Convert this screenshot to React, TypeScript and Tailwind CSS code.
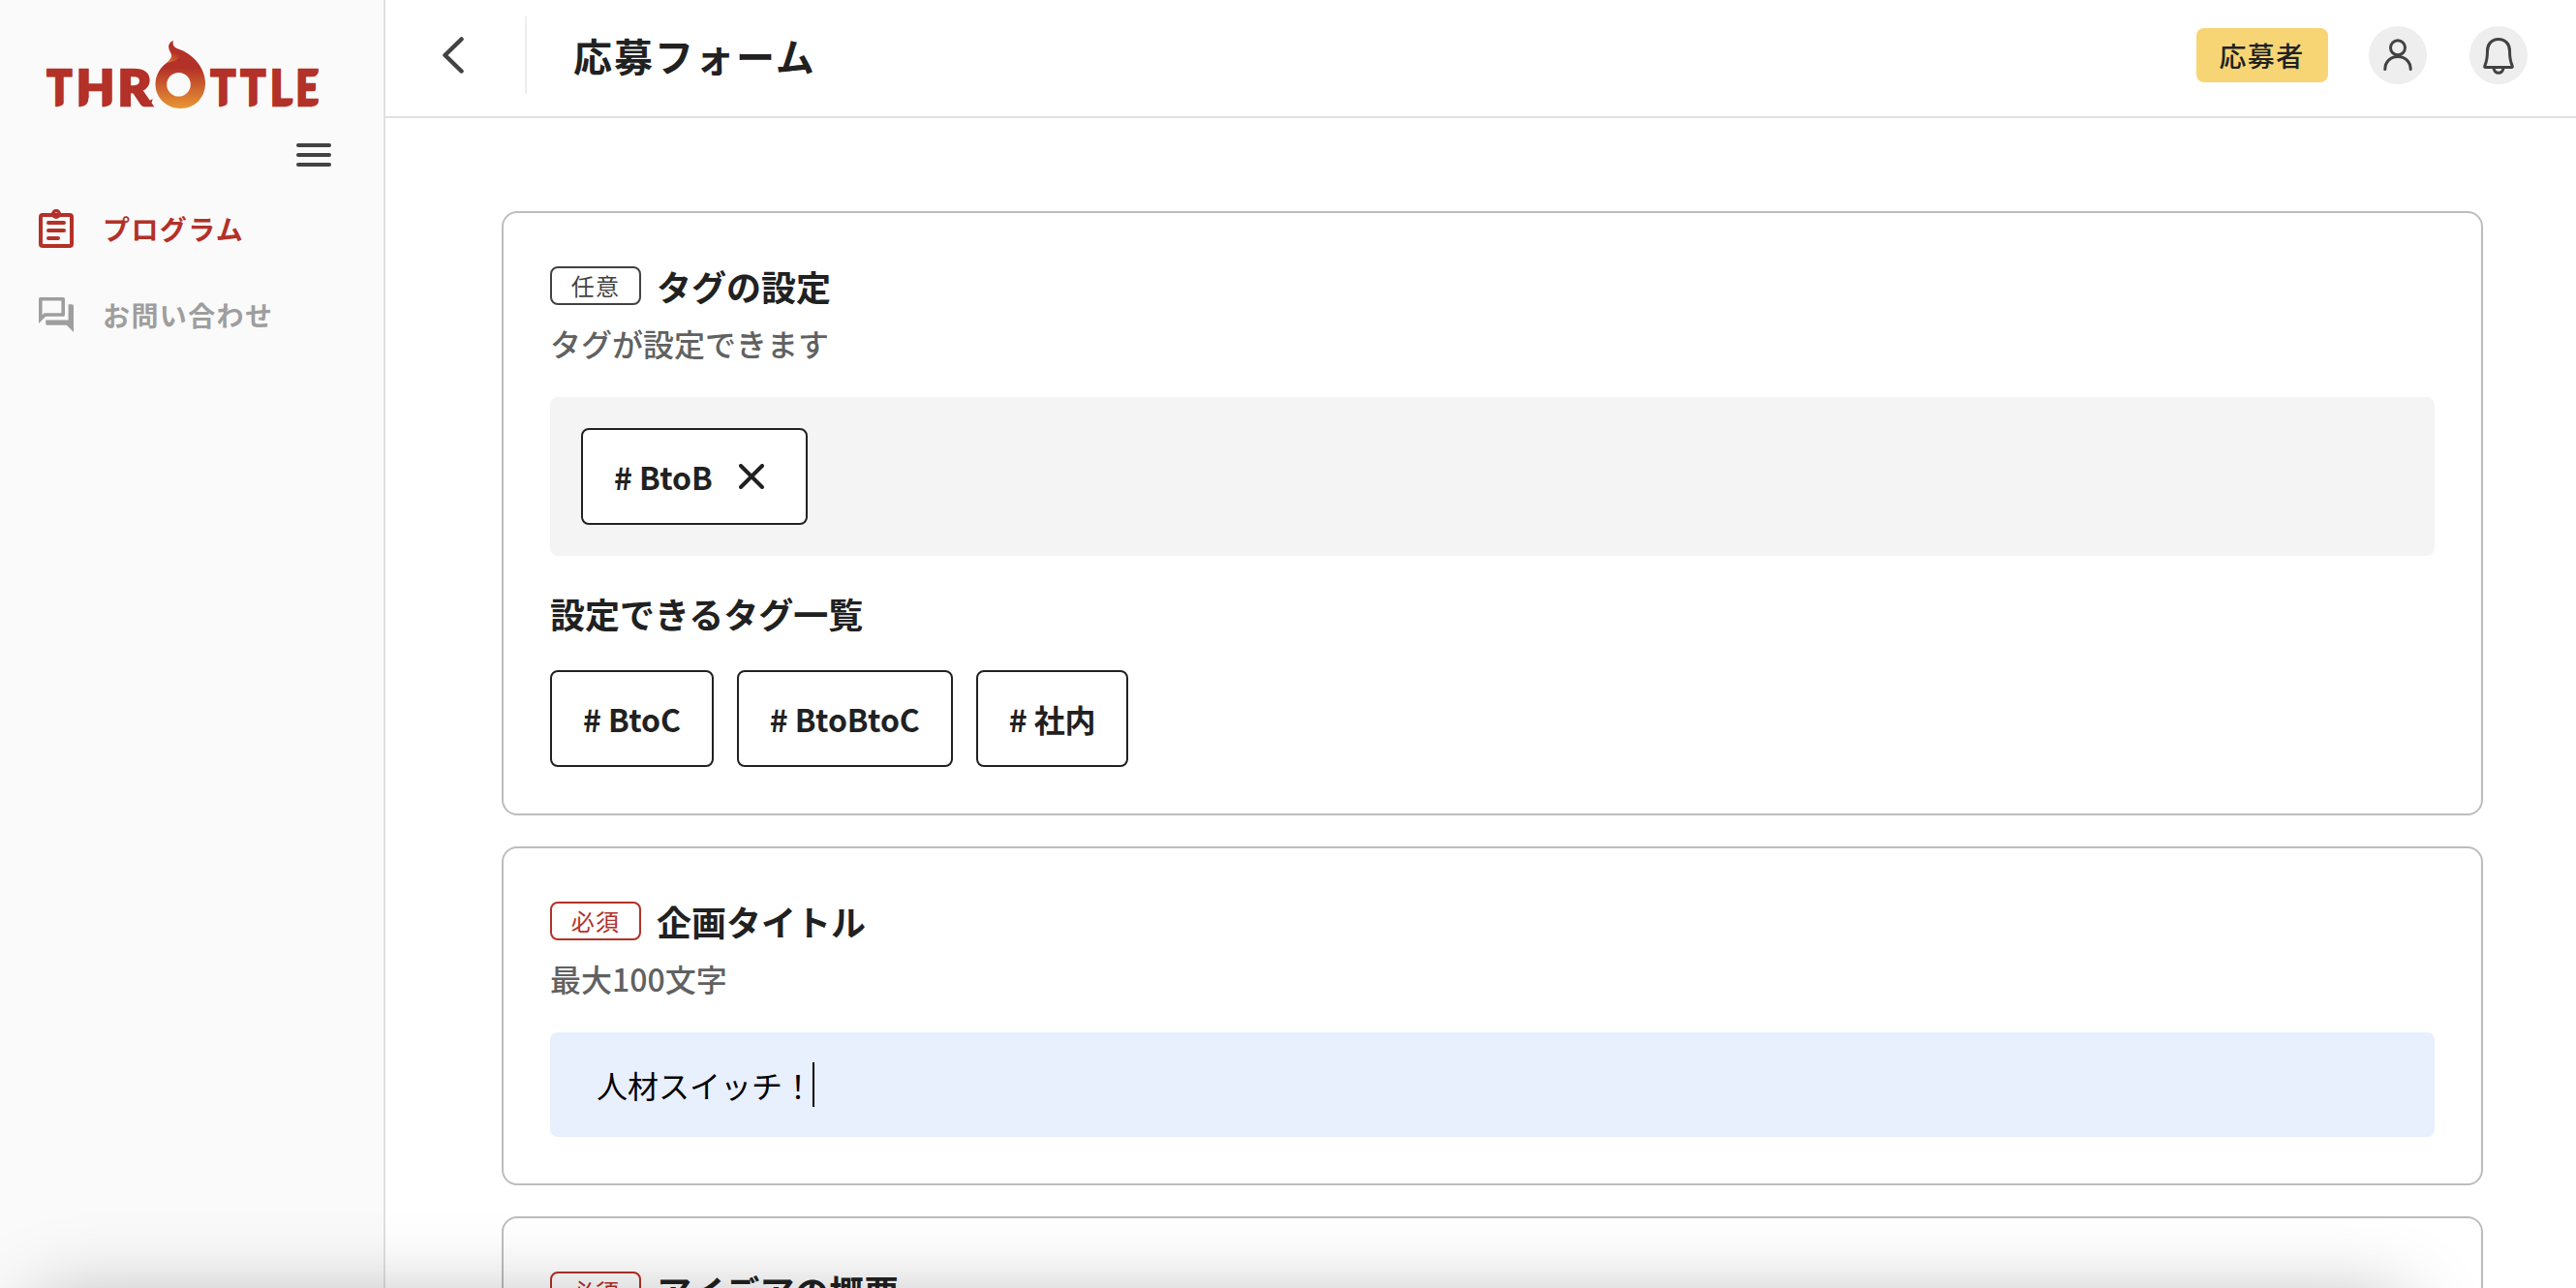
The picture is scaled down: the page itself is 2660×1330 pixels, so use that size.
import type { ReactNode } from "react";

const RED = "#b33128";

function Logo() {
  const letters = [
    { ch: "T", x: 0.6, w: 25.8 },
    { ch: "H", x: 30.7, w: 39.6 },
    { ch: "R", x: 73.6, w: 35 },
    { ch: "T", x: 169.6, w: 25.8 },
    { ch: "T", x: 200.6, w: 25.8 },
    { ch: "L", x: 231, w: 23 },
    { ch: "E", x: 257.5, w: 23.8 },
  ];
  // Right edges of the strokes whose feet are swept away in a curve
  const feet = [19.5, 43.5, 68.5, 188.5, 219.5, 255.5, 282];
  return (
    <svg width="282" height="71" viewBox="0 0 282 71" className="block overflow-visible" aria-label="THROTTLE">
      <defs>
        <linearGradient id="flame" x1="0" y1="0" x2="0" y2="1">
          <stop offset="0.4" stopColor={RED} />
          <stop offset="1" stopColor="#ea9634" />
        </linearGradient>
        <linearGradient id="lick" x1="1" y1="0" x2="0" y2="1">
          <stop offset="0.2" stopColor={RED} />
          <stop offset="1" stopColor="#e07c30" />
        </linearGradient>
      </defs>
      {letters.map((l, i) => (
        <text
          key={i}
          x={l.x}
          y="66.700"
          textLength={l.w}
          lengthAdjust="spacingAndGlyphs"
          fill={RED}
          stroke={RED}
          strokeWidth="2.600"
          className="font-['Lato'] text-[50.500px] font-black"
        >
          {l.ch}
        </text>
      ))}
      {feet.map((x) => (
        <path key={x} d={`M${x + 2} 59 H${x} C${x} 64 ${x - 3} 68 ${x - 8} 68 V70 H${x + 2} Z`} fill="#fafafa" />
      ))}
      <path d="M284 28 H282 C282 33 279 37 274 37.800 H284 Z" fill="#fafafa" />
      <path d="M284 44 H281.500 C281 49 278.500 52 274 52.500 H284 Z" fill="#fafafa" />
      <path fill={RED} d="M98 62 C101 63 106 63 109.500 60 C109.500 65 106 68 100 68 Z" />
      <path
        fill="url(#flame)"
        fillRule="evenodd"
        d="M131 0 C130 4 131 6.500 136 8.500 C150 13 164 27 164 44 C164 59 153 70 138.500 70 C124 70 112.500 59 112.500 45 C112.500 36 117 28 124 23 C130 18 130 16 127.500 11 C125 6 126 2 131 0 Z M136.500 33 A12.300 12.300 0 1 0 136.500 57.600 A12.300 12.300 0 1 0 136.500 33 Z"
      />
      <path fill="url(#lick)" d="M124.500 23 C129 19 130.500 15 128.500 12 C132 14 136 14.500 140 12 C138 20 132 21 124.500 23 Z" />
    </svg>
  );
}

function ProgramIcon() {
  return (
    <svg width="36" height="40" viewBox="0 0 36 40" fill="none" stroke="currentColor" strokeWidth="4" strokeLinecap="round">
      <rect x="2" y="6" width="32" height="32" rx="2" />
      <circle cx="18" cy="5" r="3.400" strokeWidth="3.400" />
      <path d="M10 14H26M10 22H26M10 30H20" />
    </svg>
  );
}

function ForumIcon() {
  return (
    <svg width="36" height="36" viewBox="2 2 20 20" fill="currentColor">
      <path d="M15 4v7H5.170L4 12.170V4h11m1-2H3c-.55 0-1 .45-1 1v14l4-4h10c.55 0 1-.45 1-1V3c0-.55-.45-1-1-1m5 4h-2v9H6v2c0 .55.45 1 1 1h11l4 4V7c0-.55-.45-1-1-1" />
    </svg>
  );
}

function NavItem({ icon, label, color }: { icon: ReactNode; label: string; color: string }) {
  return (
    <a className={`flex h-[42px] items-center gap-[30px] text-[28px] leading-[42px] font-bold tracking-[0.05em] ${color}`}>
      {icon}
      <span>{label}</span>
    </a>
  );
}

function Sidebar() {
  return (
    <aside className="flex w-[398px] shrink-0 flex-col border-r-2 border-[#e0e0e0] bg-[#fafafa]">
      <div className="pt-[42px] pl-12">
        <Logo />
      </div>
      <button className="mt-[35px] mr-[54px] flex w-9 flex-col gap-1.5 self-end">
        <span className="h-1 w-full rounded-full bg-[#424242]" />
        <span className="h-1 w-full rounded-full bg-[#424242]" />
        <span className="h-1 w-full rounded-full bg-[#424242]" />
      </button>
      <nav className="mt-[43px] flex flex-col gap-[47px] pl-10">
        <NavItem icon={<ProgramIcon />} label="プログラム" color="text-[#b33128]" />
        <NavItem icon={<ForumIcon />} label="お問い合わせ" color="text-[#9e9e9e]" />
      </nav>
    </aside>
  );
}

function Header() {
  return (
    <header className="flex h-[122px] shrink-0 items-center border-b-2 border-[#e0e0e0] pr-[50px] pb-1.5 pl-[59px]">
      <svg width="22" height="38" viewBox="0 0 22 38" fill="none" stroke="#424242" strokeWidth="4.500" strokeLinecap="round" strokeLinejoin="round">
        <path d="M19.500 2.500L2.500 19L19.500 35.500" />
      </svg>
      <div className="ml-[63px] h-20 w-0.5 bg-[#eeeeee]" />
      <h1 className="ml-12 text-[40px] leading-[60px] font-bold tracking-[0.05em]">応募フォーム</h1>
      <div className="ml-auto flex items-center">
        <span className="flex h-14 w-[136px] items-center justify-center rounded-lg bg-[#f7d575] pr-px text-[28px] leading-[42px] font-medium tracking-[0.05em]">
          応募者
        </span>
        <span className="ml-[42px] size-[60px] rounded-full bg-[#eeeeee]">
          <svg viewBox="0 0 60 60" fill="none" stroke="#424242" strokeWidth="3" strokeLinecap="round">
            <circle cx="30" cy="22.300" r="7.500" />
            <path d="M16.800 44.500C16.800 37 22.500 31.500 30 31.500S43.200 37 43.200 44.500" />
          </svg>
        </span>
        <span className="ml-11 size-[60px] rounded-full bg-[#eeeeee]">
          <svg viewBox="0 0 60 60" fill="none" stroke="#424242" strokeWidth="3" strokeLinecap="round" strokeLinejoin="round">
            <path d="M30 13.500C23 13.500 18.500 18.500 18.500 25.500C18.500 35 17.500 37 15.800 41C15.400 42 15.800 42.500 16.600 42.500H43.400C44.200 42.500 44.600 42 44.200 41C42.500 37 41.500 35 41.500 25.500C41.500 18.500 37 13.500 30 13.500Z" />
            <path d="M25 43.500C25.600 46.500 27.500 48.300 30 48.300S34.400 46.500 35 43.500" />
          </svg>
        </span>
      </div>
    </header>
  );
}

function Card({ required, title, note, children }: { required?: boolean; title: string; note: string; children?: ReactNode }) {
  return (
    <section className="rounded-2xl border-2 border-[#bdbdbd] p-12">
      <div className="flex items-center gap-4">
        <span
          className={`flex h-10 w-[94px] items-center justify-center rounded-lg border-2 text-2xl leading-9 tracking-[0.05em] ${
            required ? "border-[#b33128] text-[#b33128]" : "border-[#424242] text-[#424242]"
          }`}
        >
          {required ? "必須" : "任意"}
        </span>
        <h2 className="text-4xl leading-[54px] font-bold">{title}</h2>
      </div>
      <p className="mt-2 text-[32px] leading-[48px] font-medium text-[#616161]">{note}</p>
      {children}
    </section>
  );
}

function Tag({ label, removable }: { label: string; removable?: boolean }) {
  return (
    <span className="flex h-[100px] items-center rounded-lg border-2 border-[#212121] bg-white px-8 text-[32px] leading-[48px] font-bold tracking-[-0.1px] whitespace-nowrap">
      # {label}
      {removable && (
        <svg width="26" height="26" viewBox="0 0 26 26" fill="none" stroke="#212121" strokeWidth="4" strokeLinecap="round" className="mr-[11px] ml-[27px]">
          <path d="M2 2L24 24M24 2L2 24" />
        </svg>
      )}
    </span>
  );
}

export default function App() {
  return (
    <div className="relative flex h-[1330px] w-[2660px] overflow-hidden bg-white font-['Noto_Sans_CJK_JP',sans-serif] text-[#212121]">
      <Sidebar />
      <div className="flex min-w-0 flex-1 flex-col">
        <Header />
        <main className="flex flex-col gap-8 pt-24 pr-24 pl-[120px]">
          <Card title="タグの設定" note="タグが設定できます">
            <div className="mt-8 flex rounded-lg bg-[#f4f4f4] p-8">
              <Tag label="BtoB" removable />
            </div>
            <h3 className="mt-8 text-4xl leading-[54px] font-bold">設定できるタグ一覧</h3>
            <div className="mt-8 flex gap-6">
              <Tag label="BtoC" />
              <Tag label="BtoBtoC" />
              <Tag label="社内" />
            </div>
          </Card>
          <Card required title="企画タイトル" note="最大100文字">
            <div className="mt-8 flex h-[108px] items-center rounded-lg bg-[#e8effd] px-12 text-[32px] leading-[48px] text-black">
              人材スイッチ！
              <span className="-ml-px h-[46px] w-0.5 bg-black" />
            </div>
          </Card>
          <Card required title="アイデアの概要" note="" />
        </main>
      </div>
      <div className="pointer-events-none absolute top-[1345px] right-[180px] left-[40px] h-[400px] shadow-[0_0_80px_rgba(0,0,0,0.3)]" />
    </div>
  );
}
